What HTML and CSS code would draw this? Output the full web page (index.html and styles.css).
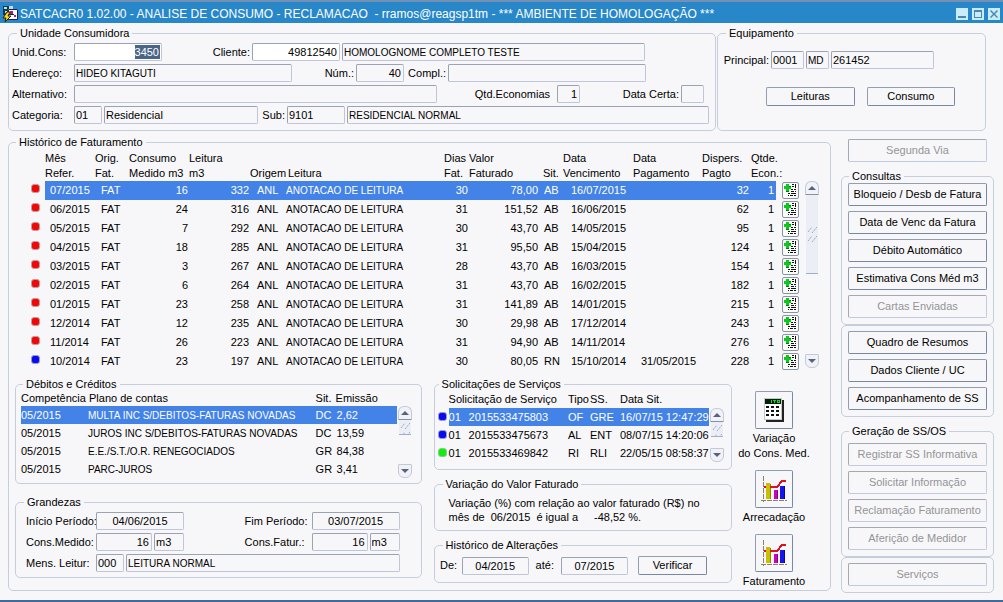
FILE: index.html
```html
<!DOCTYPE html>
<html lang="pt-BR">
<head>
<meta charset="utf-8">
<title>SATCACR0 1.02.00 - Analise de Consumo</title>
<link rel="stylesheet" href="styles.css">
</head>
<body>
<svg class="defs" aria-hidden="true">
  <symbol id="add" viewBox="0 0 15 15" shape-rendering="crispEdges">
    <path fill="#0aca1c" d="M3 1h3v2h2v3H6v2H3V6H1V3h2z"/>
    <path fill="#087a14" d="M6 3h2v1H6zM3 8h3v1H3z"/>
    <path fill="#111" d="M9 1h2v1H9zM12 1h1v4h-1zM9 3h2v1H9zM8 6h2v1H8zM11 6h2v1h-2zM8 8h3v1H8zM12 8h1v1h-1zM5 10h2v1H5zM8 10h5v1H8zM5 12h1v1H5zM7 12h3v1H7zM11 12h2v1h-2z"/>
  </symbol>
  <symbol id="chart" viewBox="0 0 28 28" shape-rendering="crispEdges">
    <path fill="none" stroke="#8a8070" d="M3.500 1v26M1 25.500h26" stroke-dasharray="5 1"/>
    <path fill="#c8c000" d="M6 9h5v15H6z"/><path fill="#8a8400" d="M10 9h1v15h-1z"/>
    <path fill="#c800c8" d="M14 15h4v9h-4z"/><path fill="#8a008a" d="M17 15h1v9h-1z"/>
    <path fill="#1414f0" d="M20 11h5v13h-5z"/><path fill="#0808a0" d="M24 11h1v13h-1z"/>
    <path fill="none" stroke="#e01020" stroke-width="2" d="M4 12h13l5-6h4"/>
    <path fill="#c8c000" d="M6 8h4v5H6z"/>
  </symbol>
  <symbol id="calc" viewBox="0 0 28 28" shape-rendering="crispEdges">
    <path fill="#222" d="M22 4h2v22H6v-2h16z"/><path fill="#fff" d="M4 2h18v22H4z"/>
    <path fill="none" stroke="#c4c8c8" d="M4.500 2.500h17v21h-17z"/>
    <path fill="#032008" d="M5 3h16v5H5z"/><path fill="#18d030" d="M11 4h1v3h-1zM13 4h3v1h-1v2h-1V5h-1zM17 4h3v3h-3z"/><path fill="#032008" d="M18 5h1v1h-1z"/>
    <path fill="#111" d="M6 10h3v2H6zM11 10h3v2h-3zM16 10h3v2h-3zM6 14h3v2H6zM11 14h3v2h-3zM16 14h3v2h-3zM6 18h3v2H6zM11 18h3v2h-3zM16 18h3v2h-3z"/>
  </symbol>
  <symbol id="up" viewBox="0 0 8 4"><path fill="#59617c" d="M4 0l4 4H0z"/></symbol>
  <symbol id="down" viewBox="0 0 8 4"><path fill="#59617c" d="M0 0h8L4 4z"/></symbol>
  <symbol id="grip" viewBox="0 0 10 20"><path fill="none" stroke="#9aa6c8" stroke-dasharray="2 1" d="M1 8l4-5M5 9l5-6M1 17l4-5M5 18l5-6"/></symbol>
</svg>

<header class="titlebar">
  <svg class="app" viewBox="0 0 16 18" aria-hidden="true">
    <path fill="#183850" d="M1 1h10v9H1z"/><path fill="#b8e0e8" d="M2 2h3v2H2zM7 1h4v3H7zM3 6h2v2H3z"/>
    <path fill="#fff" d="M6 4h10v10H6z"/><path fill="#a02080" d="M8 6h3v3H8zM12 10h2v2h-2z"/><path fill="none" stroke="#202050" d="M6.500 4.500h9v10h-9zM7 9.500h5"/>
    <path fill="#f8d820" stroke="#302000" d="M5 7L1 13h3l-1 4 6-6H6l2-4z"/>
  </svg>
  <h1>SATCACR0 1.02.00 - ANALISE DE CONSUMO - RECLAMACAO &nbsp;- rramos@reagsp1tm - *** AMBIENTE DE HOMOLOGAÇÃO ***</h1>
  <div class="controls">
    <button aria-label="Minimizar"><svg viewBox="0 0 12 12"><path d="M2 8h8v2H2z"/></svg></button>
    <button aria-label="Maximizar"><svg viewBox="0 0 12 12"><path fill-rule="evenodd" d="M2 2h8v8H2zM3 4v5h6V4z"/></svg></button>
    <button aria-label="Fechar"><svg viewBox="0 0 12 12"><path d="M2 3l1-1 3 3 3-3 1 1-3 3 3 3-1 1-3-3-3 3-1-1 3-3z"/></svg></button>
  </div>
</header>

<main class="window">
  <div class="top">
    <fieldset class="unit">
      <legend>Unidade Consumidora</legend>
      <div class="row r1">
        <label for="uc">Unid.Cons:</label><input id="uc" class="edit selected num" value="3450">
        <label for="cli" class="end">Cliente:</label><input id="cli" class="edit num" value="49812540"><input class="caps" aria-label="Nome do cliente" value="HOMOLOGNOME COMPLETO TESTE">
      </div>
      <div class="row r2">
        <label for="end">Endereço:</label><input id="end" class="caps" value="HIDEO KITAGUTI">
        <label for="num" class="end">Núm.:</label><input id="num" class="num" value="40">
        <label for="compl" class="end">Compl.:</label><input id="compl">
      </div>
      <div class="row r3">
        <label for="alt">Alternativo:</label><input id="alt">
        <label for="qtd" class="end spaced">Qtd.Economias</label><input id="qtd" class="num" value="1">
        <label for="dc" class="end">Data Certa:</label><input id="dc">
      </div>
      <div class="row r4">
        <label for="cat">Categoria:</label><input id="cat" value="01"><input aria-label="Nome da categoria" value="Residencial">
        <label for="sub" class="end">Sub:</label><input id="sub" value="9101"><input class="caps" aria-label="Nome da subcategoria" value="RESIDENCIAL NORMAL">
      </div>
    </fieldset>
    <fieldset class="equip">
      <legend>Equipamento</legend>
      <div class="row eq">
        <label for="prin" class="end">Principal:</label><input id="prin" value="0001"><input class="caps" aria-label="Tipo" value="MD"><input aria-label="Número do equipamento" value="261452">
      </div>
      <div class="pair"><button class="btn">Leituras</button><button class="btn">Consumo</button></div>
    </fieldset>
  </div>

  <div class="body">
    <fieldset class="history">
      <legend>Histórico de Faturamento</legend>
      <div class="scrollarea">
        <table class="bills">
          <colgroup><col class="w18"><col class="w50"><col class="w34"><col class="w60"><col class="w61"><col class="w36"><col><col class="w25"><col class="w74"><col class="w20"><col class="w70"><col class="w69"><col class="w49"><col class="w25"><col class="w25"></colgroup>
          <thead><tr><th></th><th>Mês<br>Refer.</th><th>Orig.<br>Fat.</th><th>Consumo<br>Medido m3</th><th>Leitura<br>m3</th><th><br>Origem</th><th><br>Leitura</th><th>Dias<br>Fat.</th><th>Valor<br>Faturado</th><th><br>Sit.</th><th>Data<br>Vencimento</th><th>Data<br>Pagamento</th><th>Dispers.<br>Pagto</th><th>Qtde.<br>Econ.:</th><th></th></tr></thead>
          <tbody>
            <tr class="on"><td><i class="dot"></i></td><td>07/2015</td><td>FAT</td><td>16</td><td>332</td><td>ANL</td><td>ANOTACAO DE LEITURA</td><td>30</td><td>78,00</td><td>AB</td><td>16/07/2015</td><td></td><td>32</td><td>1</td><td><button class="add" aria-label="Detalhes 07/2015"><svg><use href="#add"/></svg></button></td></tr>
            <tr><td><i class="dot"></i></td><td>06/2015</td><td>FAT</td><td>24</td><td>316</td><td>ANL</td><td>ANOTACAO DE LEITURA</td><td>31</td><td>151,52</td><td>AB</td><td>16/06/2015</td><td></td><td>62</td><td>1</td><td><button class="add" aria-label="Detalhes 06/2015"><svg><use href="#add"/></svg></button></td></tr>
            <tr><td><i class="dot"></i></td><td>05/2015</td><td>FAT</td><td>7</td><td>292</td><td>ANL</td><td>ANOTACAO DE LEITURA</td><td>30</td><td>43,70</td><td>AB</td><td>14/05/2015</td><td></td><td>95</td><td>1</td><td><button class="add" aria-label="Detalhes 05/2015"><svg><use href="#add"/></svg></button></td></tr>
            <tr><td><i class="dot"></i></td><td>04/2015</td><td>FAT</td><td>18</td><td>285</td><td>ANL</td><td>ANOTACAO DE LEITURA</td><td>31</td><td>95,50</td><td>AB</td><td>15/04/2015</td><td></td><td>124</td><td>1</td><td><button class="add" aria-label="Detalhes 04/2015"><svg><use href="#add"/></svg></button></td></tr>
            <tr><td><i class="dot"></i></td><td>03/2015</td><td>FAT</td><td>3</td><td>267</td><td>ANL</td><td>ANOTACAO DE LEITURA</td><td>28</td><td>43,70</td><td>AB</td><td>16/03/2015</td><td></td><td>154</td><td>1</td><td><button class="add" aria-label="Detalhes 03/2015"><svg><use href="#add"/></svg></button></td></tr>
            <tr><td><i class="dot"></i></td><td>02/2015</td><td>FAT</td><td>6</td><td>264</td><td>ANL</td><td>ANOTACAO DE LEITURA</td><td>31</td><td>43,70</td><td>AB</td><td>16/02/2015</td><td></td><td>182</td><td>1</td><td><button class="add" aria-label="Detalhes 02/2015"><svg><use href="#add"/></svg></button></td></tr>
            <tr><td><i class="dot"></i></td><td>01/2015</td><td>FAT</td><td>23</td><td>258</td><td>ANL</td><td>ANOTACAO DE LEITURA</td><td>31</td><td>141,89</td><td>AB</td><td>14/01/2015</td><td></td><td>215</td><td>1</td><td><button class="add" aria-label="Detalhes 01/2015"><svg><use href="#add"/></svg></button></td></tr>
            <tr><td><i class="dot"></i></td><td>12/2014</td><td>FAT</td><td>12</td><td>235</td><td>ANL</td><td>ANOTACAO DE LEITURA</td><td>30</td><td>29,98</td><td>AB</td><td>17/12/2014</td><td></td><td>243</td><td>1</td><td><button class="add" aria-label="Detalhes 12/2014"><svg><use href="#add"/></svg></button></td></tr>
            <tr><td><i class="dot"></i></td><td>11/2014</td><td>FAT</td><td>26</td><td>223</td><td>ANL</td><td>ANOTACAO DE LEITURA</td><td>31</td><td>94,90</td><td>AB</td><td>14/11/2014</td><td></td><td>276</td><td>1</td><td><button class="add" aria-label="Detalhes 11/2014"><svg><use href="#add"/></svg></button></td></tr>
            <tr><td><i class="dot blue"></i></td><td>10/2014</td><td>FAT</td><td>23</td><td>197</td><td>ANL</td><td>ANOTACAO DE LEITURA</td><td>30</td><td>80,05</td><td>RN</td><td>15/10/2014</td><td>31/05/2015</td><td>228</td><td>1</td><td><button class="add" aria-label="Detalhes 10/2014"><svg><use href="#add"/></svg></button></td></tr>
          </tbody>
        </table>
        <div class="scroll tall"><button aria-label="Subir"><svg><use href="#up"/></svg></button><span class="thumb"><svg><use href="#grip"/></svg></span><button aria-label="Descer"><svg><use href="#down"/></svg></button></div>
      </div>

      <div class="lower">
        <div class="left">
          <fieldset class="debits">
            <legend>Débitos e Créditos</legend>
            <div class="scrollarea">
              <table class="small">
                <colgroup><col class="w66"><col><col class="w20"><col class="w61"></colgroup>
                <thead><tr><th>Competência</th><th>Plano de contas</th><th>Sit.</th><th>Emissão</th></tr></thead>
                <tbody>
                  <tr class="on"><td>05/2015</td><td>MULTA INC S/DEBITOS-FATURAS NOVADAS</td><td>DC</td><td>2,62</td></tr>
                  <tr><td>05/2015</td><td>JUROS INC S/DEBITOS-FATURAS NOVADAS</td><td>DC</td><td>13,59</td></tr>
                  <tr><td>05/2015</td><td>E.E./S.T./O.R. RENEGOCIADOS</td><td>GR</td><td>84,38</td></tr>
                  <tr><td>05/2015</td><td>PARC-JUROS</td><td>GR</td><td>3,41</td></tr>
                </tbody>
              </table>
              <div class="scroll"><button aria-label="Subir"><svg><use href="#up"/></svg></button><span class="thumb"><svg><use href="#grip"/></svg></span><button aria-label="Descer"><svg><use href="#down"/></svg></button></div>
            </div>
          </fieldset>
          <fieldset class="amounts">
            <legend>Grandezas</legend>
            <div class="row g1"><label for="ini">Início Período:</label><input id="ini" class="mid" value="04/06/2015"><label for="fim" class="fim">Fim Período:</label><input id="fim" class="mid" value="03/07/2015"></div>
            <div class="row g2"><label for="cm">Cons.Medido:</label><input id="cm" class="num" value="16"><input aria-label="Unidade medida" value="m3"><label for="cf" class="fim">Cons.Fatur.:</label><input id="cf" class="num" value="16"><input aria-label="Unidade faturada" value="m3"></div>
            <div class="row g3"><label for="ml">Mens. Leitur:</label><input id="ml" value="000"><input class="caps" aria-label="Mensagem" value="LEITURA NORMAL"></div>
          </fieldset>
        </div>
        <div class="middle">
          <fieldset class="requests">
            <legend>Solicitações de Serviços</legend>
            <div class="scrollarea">
              <table class="small">
                <colgroup><col class="w11"><col class="w20"><col><col class="w22"><col class="w30"><col class="w89"></colgroup>
                <thead><tr><th></th><th colspan="2">Solicitação de Serviço</th><th>Tipo</th><th>SS.</th><th>Data Sit.</th></tr></thead>
                <tbody>
                  <tr class="on"><td><i class="dot blue"></i></td><td>01</td><td>2015533475803</td><td>OF</td><td>GRE</td><td>16/07/15 12:47:29</td></tr>
                  <tr><td><i class="dot blue"></i></td><td>01</td><td>2015533475673</td><td>AL</td><td>ENT</td><td>08/07/15 14:20:06</td></tr>
                  <tr><td><i class="dot green"></i></td><td>01</td><td>2015533469842</td><td>RI</td><td>RLI</td><td>22/05/15 08:58:37</td></tr>
                </tbody>
              </table>
              <div class="scroll"><button aria-label="Subir"><svg><use href="#up"/></svg></button><span class="thumb"><svg><use href="#grip"/></svg></span><button aria-label="Descer"><svg><use href="#down"/></svg></button></div>
            </div>
          </fieldset>
          <fieldset class="variation">
            <legend>Variação do Valor Faturado</legend>
            <p>Variação (%) com relação ao valor faturado (R$) no</p>
            <p class="values"><span>mês de</span><span>06/2015</span><span>é igual a</span><span class="pct">-48,52 %.</span></p>
          </fieldset>
          <fieldset class="changes">
            <legend>Histórico de Alterações</legend>
            <div class="row ch"><label for="de">De:</label><input id="de" class="mid" value="04/2015"><label for="ate">até:</label><input id="ate" class="mid" value="07/2015"><button class="btn">Verificar</button></div>
          </fieldset>
        </div>
        <div class="tools">
          <div class="tool"><button aria-labelledby="l1"><svg><use href="#calc"/></svg></button><span id="l1">Variação<br>do Cons. Med.</span></div>
          <div class="tool"><button aria-labelledby="l2"><svg><use href="#chart"/></svg></button><span id="l2">Arrecadação</span></div>
          <div class="tool"><button aria-labelledby="l3"><svg><use href="#chart"/></svg></button><span id="l3">Faturamento</span></div>
        </div>
      </div>
    </fieldset>

    <aside class="side">
      <button class="btn lone" disabled>Segunda Via</button>
      <fieldset class="group">
        <legend>Consultas</legend>
        <div class="stack"><button class="btn">Bloqueio / Desb de Fatura</button><button class="btn">Data de Venc da Fatura</button><button class="btn">Débito Automático</button><button class="btn">Estimativa Cons Méd m3</button><button class="btn" disabled>Cartas Enviadas</button></div>
      </fieldset>
      <div class="group plain stack"><button class="btn">Quadro de Resumos</button><button class="btn">Dados Cliente / UC</button><button class="btn">Acompanhamento de SS</button></div>
      <fieldset class="group orders">
        <legend>Geração de SS/OS</legend>
        <div class="stack"><button class="btn" disabled>Registrar SS Informativa</button><button class="btn" disabled>Solicitar Informação</button><button class="btn" disabled>Reclamação Faturamento</button><button class="btn" disabled>Aferição de Medidor</button></div>
      </fieldset>
      <div class="group plain stack"><button class="btn" disabled>Serviços</button></div>
    </aside>
  </div>
</main>
</body>
</html>
```

FILE: styles.css
```css
* { box-sizing: border-box; }
body {
  margin: 0; min-height: 100vh; display: flex; flex-direction: column;
  background: #f7f7f9; color: #000;
  font: 11px/13px "Liberation Sans", Arial, sans-serif;
}
button, input { font: inherit; color: inherit; margin: 0; padding: 0; }
.defs { display: none; }

.titlebar {
  display: flex; align-items: center; gap: 2px; height: 23px; padding: 2px 3px 0 2px;
  background: #2787c9; border-top: 2px solid #7391b5; color: #fff;
}
.titlebar h1 { flex: 1; margin: 0; font-size: 12px; font-weight: 400; line-height: 16px; white-space: nowrap; }
.app { width: 16px; height: 18px; }
.controls { display: flex; gap: 4px; }
.controls button { width: 12px; height: 12px; border: 0; background: #c8ecfa; display: block; }
.controls svg { display: block; width: 12px; height: 12px; fill: #4a86b0; }

.window { flex: 1; padding: 4px 9px 7px 8px; border-bottom: 2px solid #44689a; }
.top { display: flex; gap: 1px; margin-right: 8px; }
.unit { flex: 1; }
.equip { width: 269px; }
fieldset { margin: 0; padding: 0; min-width: 0; border: 1px solid #c6cede; border-radius: 5px; }
legend { margin-left: 8px; padding: 0 3px; line-height: 13px; white-space: nowrap; }
.unit { padding: 3px 6px 6px 3px; }
.unit legend, .equip legend { margin-left: 5px; }

.row { display: grid; align-items: center; column-gap: 2px; margin-bottom: 3px; }
.row:last-child { margin-bottom: 0; }
.row label { white-space: nowrap; }
.end { text-align: right; }
.spaced { padding-right: 5px; }
input {
  width: 100%; min-width: 0; height: 18px; padding: 0 1px; background: #f7f7f9;
  border: 1px solid; border-color: #9aa2b4 #c0c6da #c0c6da #9aa2b4; border-radius: 2px;
}
.edit { background: #fff; }
.num { text-align: right; padding-right: 2px; }
.mid { text-align: center; }
.caps { font-size: 10px; }
.selected { color: #fff; background: linear-gradient(#4a6588, #4a6588) right 1px center / 25px 14px no-repeat #fff; }
.r1 { grid-template-columns: 60px 88px 86px 88px 1fr 62px; }
.r2 { grid-template-columns: 60px 218px 60px 48px 40px 1fr 61px; }
.r3 { grid-template-columns: 60px 1fr 116px 23px 97px 23px 3px; }
.r4 { grid-template-columns: 60px 28px 154px 25px 58px 1fr; }
.equip { padding: 11px 30px 0 3px; }
.eq { grid-template-columns: 48px 33px 23px 1fr; margin: 0 21px 0 0; }
.pair { display: flex; gap: 12px; margin: 18px 0 0 45px; }
.pair .btn { flex: 1; }

.btn {
  height: 19px; background: #f7f7f9; white-space: nowrap;
  border: 1px solid; border-color: #949cb0 #7688a2 #7688a2 #949cb0; border-radius: 2px;
}
.btn:disabled { color: #949498; border-color: #a4a8b2 #c2cae2 #c2cae2 #a4a8b2; }

.body { display: flex; gap: 10px; align-items: flex-start; }
.history { flex: 1; margin-top: 5px; padding: 2px 8px 1px 6px; }
.history > legend { margin-left: 1px; }
.scrollarea { display: flex; }
.history > .scrollarea { padding: 0 3px 0 12px; gap: 4px; }
table { flex: 1; width: 0; table-layout: fixed; border-collapse: collapse; }
th, td { padding: 0; text-align: left; font-weight: 400; white-space: nowrap; }
th { line-height: 15px; }
td { height: 19px; }
.w11 { width: 11px; } .w18 { width: 18px; } .w20 { width: 20px; } .w22 { width: 22px; } .w25 { width: 25px; }
.w30 { width: 30px; } .w34 { width: 34px; } .w36 { width: 36px; } .w49 { width: 49px; } .w50 { width: 50px; }
.w60 { width: 60px; } .w61 { width: 61px; } .w66 { width: 66px; } .w69 { width: 69px; } .w70 { width: 70px; }
.w74 { width: 74px; } .w89 { width: 89px; }
.on td { background: #4382e6; color: #fff; }
.bills .on td:first-child, .bills .on td:last-child, .requests .on td:first-child { background: none; }
.bills td:nth-child(1) { padding-left: 4px; }
.bills td:nth-child(2) { padding-left: 5px; }
.bills td:nth-child(3) { padding-left: 6px; }
.bills td:nth-child(4), .bills td:nth-child(5), .bills td:nth-child(8) { text-align: right; padding-right: 1px; }
.bills td:nth-child(6) { padding-left: 7px; }
.bills td:nth-child(7), .debits td:nth-child(2) { font-size: 10px; }
.bills th:nth-child(7), .debits th:nth-child(2) { padding-left: 2px; }
.bills td:nth-child(9) { text-align: right; padding-right: 5px; }
.bills td:nth-child(10) { padding-left: 1px; }
.bills td:nth-child(11), .bills td:nth-child(12) { padding-left: 8px; }
.bills td:nth-child(13), .bills td:nth-child(14) { text-align: right; padding-right: 2px; }
.bills td:nth-child(15) { padding-left: 6px; }
.dot { display: block; width: 9px; height: 9px; border: 1px solid #c89a9a; border-radius: 3px; background: #f00808; margin-bottom: 4px; }
.dot.blue { background: #0a0aee; border-color: #9a9ad0; }
.dot.green { background: #10ee10; border-color: #90c890; }
.small .dot { margin-bottom: 2px; }
.add { display: block; width: 17px; height: 17px; border: 1px solid #8a92a4; border-radius: 2px; background: #fafcf8; }
.add svg { display: block; width: 15px; height: 15px; }

.scroll { display: flex; flex-direction: column; width: 14px; margin-top: 15px; }
.scroll.tall { margin: 30px 0 3px; }
.scroll button { width: 14px; height: 14px; border: 1px solid #c4c9d8; border-bottom-color: #8890a8; border-radius: 6px 6px 1px 1px; background: #f1f2f8; display: grid; place-items: center; }
.scroll button:last-child { margin-top: auto; border-color: #c4c9d8; border-radius: 1px 1px 6px 6px; }
.scroll button svg { width: 8px; height: 4px; }
.thumb { width: 12px; height: 15px; margin: 0 1px; overflow: hidden; background: #eceef6; border-bottom: 1px solid #a4accc; display: grid; place-items: center; }
.thumb svg { width: 10px; height: 20px; }
.tall .thumb { height: 79px; }

.lower { display: flex; margin-top: 7px; }
.left { flex: 406; min-width: 0; }
.middle { flex: 298; min-width: 0; margin-left: 12px; }
.small td { height: 18px; }
.debits { padding: 0 9px 5px 5px; }
.debits legend { margin-left: 2px; }
.debits .scroll, .requests .scroll { margin-left: 1px; }
.debits td:nth-child(2), .debits td:nth-child(4) { padding-left: 1px; }
.amounts { margin-top: 12px; padding: 3px 21px 5px 10px; }
.amounts legend { margin-left: -2px; }
.g1 { grid-template-columns: 68px 88px 1fr 88px; }
.g2 { grid-template-columns: 68px 56px 30px 1fr 56px 30px; }
.g3 { grid-template-columns: 68px 28px 1fr; }
.fim { justify-self: end; width: 65px; }
.requests { padding: 0 7px 7px 3px; }
.requests legend { margin-left: 1px; }
.requests th { line-height: 17px; }
.requests .scroll { margin-top: 17px; }
.variation { margin-top: 8px; padding: 5px 14px 6px; }
.variation legend { margin-left: -6px; }
.variation p { margin: 0; line-height: 14px; white-space: nowrap; }
.values { display: flex; gap: 6px; }
.pct { margin-left: 10px; }
.changes { margin-top: 8px; padding: 4px 24px 7px 4px; }
.changes legend { margin-left: 4px; }
.ch { grid-template-columns: 20px 1fr 26px 1fr 76px; column-gap: 3px; }
.ch label { justify-self: center; }
.ch .btn { margin-left: 7px; }
.tools { width: 84px; margin-right: 6px; padding-top: 13px; display: flex; flex-direction: column; gap: 9px; }
.tool { display: flex; flex-direction: column; align-items: center; text-align: center; line-height: 15px; white-space: nowrap; gap: 2px; }
.tool button { width: 38px; height: 38px; display: grid; place-items: center; background: #f7f7f9; border: 1px solid; border-color: #949cb0 #7688a2 #7688a2 #949cb0; border-radius: 2px; }
.tool svg { width: 28px; height: 28px; }

.side { width: 153px; padding-top: 8px; }
.side .btn { display: block; width: 100%; height: 23px; }
.side .lone { width: 139px; margin: 0 7px 8px; }
.group { padding: 0 6px 6px; border: 1px solid #c6cede; border-radius: 5px; }
.group.plain { padding: 5px 6px 6px; }
.stack { display: flex; flex-direction: column; gap: 5px; }
.group legend { margin-left: 1px; }
.orders { margin-top: 8px; padding-top: 5px; }
```
